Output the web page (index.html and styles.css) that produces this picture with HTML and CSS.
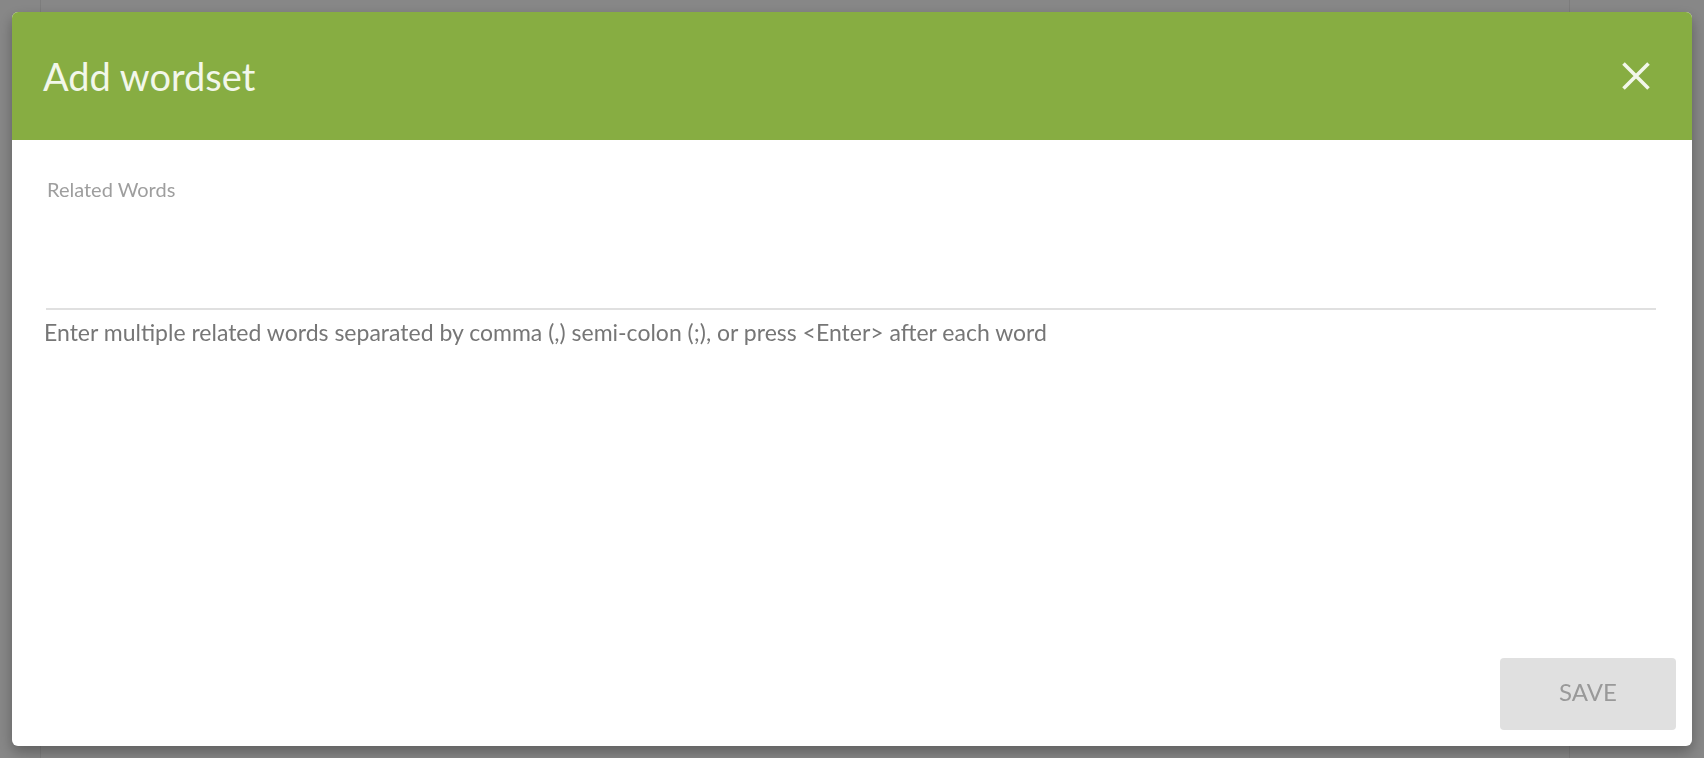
FILE: index.html
```html
<!DOCTYPE html>
<html lang="en">
<head>
  <meta charset="UTF-8">
  <title>Add wordset</title>
  <link rel="stylesheet" href="styles.css">
</head>
<body>
  <div class="page">
    <div class="table">
      <div class="table-head"></div>
      <div class="table-row"></div>
      <div class="table-row"></div>
      <div class="table-row"></div>
      <div class="table-row"></div>
      <div class="table-row"></div>
      <div class="table-row"></div>
      <div class="table-row"></div>
    </div>
  </div>

  <div class="overlay">
    <div class="dialog">
      <header class="dialog-header">
        <h1 class="dialog-title">Add wordset</h1>
        <button class="close-button" aria-label="Close">
          <svg width="28" height="28" viewBox="0 0 28 28">
            <path d="M1.5 1.5 L26.5 26.5 M26.5 1.5 L1.5 26.5" stroke="currentColor" stroke-width="3.6" fill="none"/>
          </svg>
        </button>
      </header>
      <main class="dialog-body">
        <div class="field">
          <label class="field-label" for="related-words">Related Words</label>
          <input id="related-words" class="field-input" type="text">
        </div>
        <p class="field-help">Enter multiple related words separated by comma (,) semi-colon (;), or press &lt;Enter&gt; after each word</p>
      </main>
      <footer class="dialog-footer">
        <button class="save-button" disabled>SAVE</button>
      </footer>
    </div>
  </div>
</body>
</html>
```

FILE: styles.css
```css
body, html {
  margin: 0;
  padding: 0;
  height: 100%;
  font-family: Lato, "Open Sans", sans-serif;
  background: #fff;
  overflow: hidden;
}
.page {
  height: 100%;
  padding: 0 134px 0 40px;
}
.table {
  height: 100%;
  border-left: 1px solid #ececec;
  border-right: 1px solid #ececec;
}
.table-head {
  height: 78px;
  border-bottom: 1px solid #ececec;
  box-sizing: border-box;
}
.table-row {
  height: 97.5px;
  border-bottom: 1px solid #ececec;
  box-sizing: border-box;
}
.overlay {
  position: fixed;
  top: 0;
  left: 0;
  right: 0;
  bottom: 0;
  background: rgba(0, 0, 0, 0.47);
  padding: 12px;
  box-sizing: border-box;
}
.dialog {
  height: 734px;
  background: #fff;
  border-radius: 6px;
  overflow: hidden;
  display: flex;
  flex-direction: column;
  box-shadow: 0 6px 14px rgba(0, 0, 0, 0.3);
}
.dialog-header {
  height: 128px;
  flex-shrink: 0;
  background: #87ad42;
  display: flex;
  align-items: center;
  justify-content: space-between;
  padding: 0 42px 0 31px;
  color: #f2f7ea;
}
.dialog-title {
  margin: 0;
  font-size: 38px;
  font-weight: 400;
  letter-spacing: 0;
}
.close-button {
  background: none;
  border: none;
  padding: 0;
  color: #f2f7ea;
  cursor: pointer;
  display: flex;
}
.dialog-body {
  flex: 1;
  padding: 37px 36px 0 34px;
}
.field {
  display: flex;
  flex-direction: column;
}
.field-label {
  font-size: 20px;
  color: #9e9e9e;
  padding-left: 1px;
}
.field-input {
  border: none;
  border-bottom: 2px solid #e0e0e0;
  height: 105px;
  outline: none;
  font-size: 20px;
  background: transparent;
}
.field-help {
  margin: 8px 0 0 -2px;
  font-size: 23px;
  color: #767676;
}
.dialog-footer {
  display: flex;
  justify-content: flex-end;
  padding: 0 16px 16px 0;
}
.save-button {
  width: 176px;
  height: 72px;
  padding: 0 0 6px;
  border: none;
  border-radius: 4px;
  background: #e0e0e0;
  color: #999;
  font-family: Lato, "Open Sans", sans-serif;
  font-size: 24px;
}
```
